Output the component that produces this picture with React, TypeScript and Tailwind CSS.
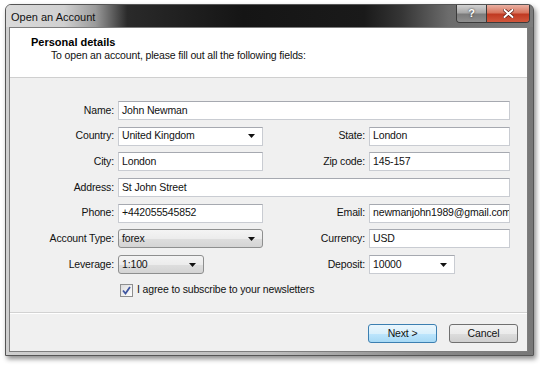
import React from "react";

const arrow = (
  <svg width="7" height="4" viewBox="0 0 7 4" className="shrink-0">
    <path d="M0 0h7L3.5 4z" fill="#111" />
  </svg>
);

function TextBox({ value, w }: { value: string; w: string }) {
  return (
    <div
      className={`${w} h-[19px] flex items-center pl-[3px] bg-white border border-[#c9ccd2] border-t-[#a6a9b0] whitespace-nowrap overflow-hidden`}
    >
      {value}
    </div>
  );
}

function EditCombo({ value, w }: { value: string; w: string }) {
  return (
    <div
      className={`${w} h-[19px] flex items-center justify-between pl-[3px] pr-[7px] bg-white border border-[#c9ccd2] border-t-[#a6a9b0]`}
    >
      <span>{value}</span>
      {arrow}
    </div>
  );
}

function ListCombo({ value, w }: { value: string; w: string }) {
  return (
    <div
      className={`${w} h-[19px] flex items-center justify-between pl-[3px] pr-[7px] rounded-[3px] border border-[#8e8f8f] bg-[linear-gradient(#f4f4f4_0%,#ececec_50%,#dedede_51%,#d4d4d4_100%)]`}
    >
      <span>{value}</span>
      {arrow}
    </div>
  );
}

function Label({ text, w }: { text: string; w: string }) {
  return <div className={`${w} text-right pr-[4px] whitespace-nowrap`}>{text}</div>;
}

export default function App() {
  return (
    <div className="w-[540px] h-[367px] bg-white pt-[4px] pl-[5px] font-['Liberation_Sans',Arial,sans-serif] text-[10.5px] tracking-[-0.15px] text-[#111]">
      <div className="w-[529px] h-[352px] flex flex-col rounded-t-[6px] border border-[#555] bg-[linear-gradient(to_right,#cfcfcf,#bdbdbd_50%,#8a8a8a_80%,#777)] shadow-[2px_3px_5px_rgba(0,0,0,0.45)]">
        {/* title bar */}
        <div className="h-[22px] flex items-start justify-between rounded-t-[5px] bg-[linear-gradient(to_right,#dadada_0%,#d0d0d0_11%,#9a9a9a_17%,#2a2a2a_23%,#151515_45%,#1a1a1a_68%,#353535_75%,#6c6c6c_84%,#7c7c7c_100%)]">
          <span className="pl-[5px] pt-[4px] text-[11px] tracking-normal text-[#111]">Open an Account</span>
          <div className="flex mr-[3px] border border-t-0 border-[#3b3b3b] rounded-b-[4px] overflow-hidden">
            <div className="w-[30px] h-[17px] flex items-center justify-center border-r border-[#3b3b3b] bg-[linear-gradient(#d2d2d2_0%,#a9a9a9_45%,#7b7b7b_55%,#8f8f8f_100%)]">
              <span className="text-white font-bold text-[11px] leading-none [text-shadow:0_0_2px_#222]">?</span>
            </div>
            <div className="w-[42px] h-[17px] flex items-center justify-center bg-[linear-gradient(#eab0a2_0%,#d8765f_45%,#c03a22_55%,#d2573c_100%)]">
              <svg width="11" height="9" viewBox="0 0 11 9">
                <path d="M1.5 1l8 7M9.5 1l-8 7" stroke="#5a1a10" strokeWidth="3.4" strokeLinecap="round" />
                <path d="M1.5 1l8 7M9.5 1l-8 7" stroke="#fff" strokeWidth="2" strokeLinecap="round" />
              </svg>
            </div>
          </div>
        </div>

        {/* client area */}
        <div className="flex-1 ml-[3px] mr-[5px] flex flex-col border border-[#7d7d7d] bg-[#f0f0f0]">
          <div className="h-[50px] bg-white border-b border-[#cfcfcf] pl-[21px] pt-[8px] leading-[13px]">
            <div className="font-bold text-[11px] tracking-normal text-[#000]">Personal details</div>
            <div className="pl-[20px]">To open an account, please fill out all the following fields:</div>
          </div>

          <div className="h-[234px] pt-[23px] flex flex-col gap-[6.7px]">
            <div className="flex items-center h-[19px]">
              <Label text="Name:" w="w-[108px]" />
              <TextBox value="John Newman" w="w-[392px]" />
            </div>
            <div className="flex items-center h-[19px]">
              <Label text="Country:" w="w-[108px]" />
              <EditCombo value="United Kingdom" w="w-[145px]" />
              <Label text="State:" w="w-[106px]" />
              <TextBox value="London" w="w-[141px]" />
            </div>
            <div className="flex items-center h-[19px]">
              <Label text="City:" w="w-[108px]" />
              <TextBox value="London" w="w-[145px]" />
              <Label text="Zip code:" w="w-[106px]" />
              <TextBox value="145-157" w="w-[141px]" />
            </div>
            <div className="flex items-center h-[19px]">
              <Label text="Address:" w="w-[108px]" />
              <TextBox value="St John Street" w="w-[392px]" />
            </div>
            <div className="flex items-center h-[19px]">
              <Label text="Phone:" w="w-[108px]" />
              <TextBox value="+442055545852" w="w-[145px]" />
              <Label text="Email:" w="w-[106px]" />
              <TextBox value="newmanjohn1989@gmail.com" w="w-[141px]" />
            </div>
            <div className="flex items-center h-[19px]">
              <Label text="Account Type:" w="w-[108px]" />
              <ListCombo value="forex" w="w-[145px]" />
              <Label text="Currency:" w="w-[106px]" />
              <TextBox value="USD" w="w-[141px]" />
            </div>
            <div className="flex items-center h-[19px]">
              <Label text="Leverage:" w="w-[108px]" />
              <ListCombo value="1:100" w="w-[86px]" />
              <Label text="Deposit:" w="w-[165px]" />
              <EditCombo value="10000" w="w-[86px]" />
            </div>
            <div className="flex items-center h-[19px] pl-[110px] gap-[4px]">
              <div className="w-[13px] h-[13px] border border-[#8e8f8f] bg-[linear-gradient(135deg,#dcdcdc,#fefefe)] flex items-center justify-center">
                <svg width="9" height="9" viewBox="0 0 9 9">
                  <path d="M1 4.5l2.5 3L8 1" fill="none" stroke="#3e55a0" strokeWidth="1.8" />
                </svg>
              </div>
              <span>I agree to subscribe to your newsletters</span>
            </div>
          </div>

          <div className="flex-1 border-t border-[#d2d2d2] shadow-[inset_0_1px_0_#fff] flex justify-end items-start gap-[12px] pt-[11px] pr-[9px]">
            <div className="w-[69px] h-[19px] flex items-center justify-center rounded-[3px] border border-[#3c7fb1] bg-[linear-gradient(#eaf6fd_0%,#d9f0fc_50%,#bee6fd_51%,#a7d9f5_100%)]">
              Next &gt;
            </div>
            <div className="w-[69px] h-[19px] flex items-center justify-center rounded-[3px] border border-[#707070] bg-[linear-gradient(#f2f2f2_0%,#ebebeb_50%,#dddddd_51%,#cfcfcf_100%)]">
              Cancel
            </div>
          </div>
        </div>
        <div className="h-[3px]" />
      </div>
    </div>
  );
}
